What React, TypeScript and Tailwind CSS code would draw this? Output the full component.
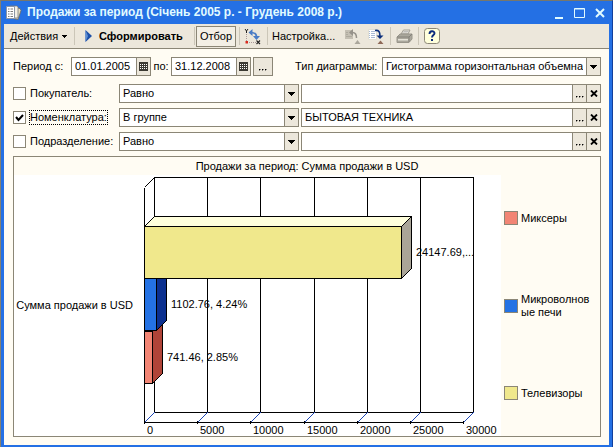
import type { ReactNode } from 'react';

const inputClass = 'min-w-0 flex-1 bg-white px-[3px] text-[11px] outline-none';
const boxClass = 'flex h-[19px] min-w-0 border border-[#8b8676] bg-white';
const cellClass = 'flex w-3.5 shrink-0 items-center justify-center border-l border-[#8b8676] bg-[#ece7db]';

const filters = [
  { id: 'buyer', label: 'Покупатель:', mode: 'Равно', value: '', checked: false },
  { id: 'item', label: 'Номенклатура:', mode: 'В группе', value: 'БЫТОВАЯ ТЕХНИКА', checked: true },
  { id: 'dept', label: 'Подразделение:', mode: 'Равно', value: '', checked: false },
];

const Arrow = () => (
  <svg width="7" height="4" viewBox="0 0 7 4" shapeRendering="crispEdges">
    <path d="M0 0h7v1h-1v1h-1v1h-1v1h-1v-1h-1v-1h-1v-1h-1z" fill="#000" />
  </svg>
);

const Dots = () => (
  <svg width="8" height="8" viewBox="0 0 8 8" shapeRendering="crispEdges">
    <path d="M0 6h1v1H0zM3 6h1v1H3zM6 6h1v1H6z" fill="#000" stroke="#000" strokeWidth=".4" />
  </svg>
);

const Cross = () => (
  <svg width="8" height="7" viewBox="0 0 8 7">
    <path d="M1 .5l6 6M7 .5l-6 6" stroke="#000" strokeWidth="1.8" />
  </svg>
);

const Separator = () => <span className="h-[18px] w-px bg-[#cbc6b8]" />;

const TitleIcon = () => (
  <svg width="16" height="16" viewBox="0 0 16 16">
    <path d="M7 2l7 1.500 1 2-3 9-5-1z" fill="#e6dfc4" stroke="#6f6a5c" strokeWidth=".8" />
    <path d="M4 1h7l1 1v11H4z" fill="#f3f0e6" stroke="#77797c" strokeWidth=".8" />
    <path d="M.5 1.500h8v12h-8z" fill="#fff" stroke="#8a95a5" />
    <path d="M2 4h1.500m1 0H7M2 6.500h1.500m1 0H7M2 9h1.500m1 0H7M2 11.500h1.500m1 0H7" stroke="#7b7b7b" />
  </svg>
);

const AxesIcon = () => (
  <svg width="17" height="17" viewBox="0 0 17 17">
    <path d="M1 1l1.500 2L4 1M2.500 3v2" fill="none" stroke="#222" />
    <path d="M2.500 6v8M5 14.500h7" fill="none" stroke="#a99" strokeDasharray="1 1" />
    <path d="M1.500 13h2.500v2.500H1.500z" fill="#d92b1f" />
    <path d="M12.500 12.500l3.500 3.500m0-3.500l-3.500 3.500" stroke="#222" strokeWidth="1.100" />
    <path d="M7 4.500c3 0 5.500 1.500 5.500 4.500" fill="none" stroke="#4a7cc6" strokeWidth="1.700" />
    <path d="M4.500 4.500L8.500 1v7zM9 8h7l-3.500 4z" fill="#4a7cc6" />
  </svg>
);

const SaveIcon = () => (
  <svg width="17" height="17" viewBox="0 0 17 17">
    <path d="M1 2h8v9H1z" fill="#c4bfb3" />
    <path d="M2 4.500h2M2 6.500h2M2 8.500h6" stroke="#aeaa9e" />
    <path d="M8.500 4.500c3 0 4 1.500 4 5.500" fill="none" stroke="#96928a" strokeWidth="1.500" />
    <path d="M5 4.500L9 1v7z" fill="#96928a" />
    <path d="M10.500 16l3-4 3 4z" fill="#aaa69b" />
  </svg>
);

const RestoreIcon = () => (
  <svg width="17" height="17" viewBox="0 0 17 17">
    <path d="M1.500 1.500h8v10h-8z" fill="#fff" stroke="#e2dfd4" />
    <path d="M2 3.500h1m1 0h4M2 5.500h1m1 0h4M2 7.500h1m1 0h4M2 9.500h1m1 0h4" stroke="#a9bbd4" />
    <path d="M8 2.500c4-.5 5 1 5 6" fill="none" stroke="#0b2f7c" strokeWidth="1.600" />
    <path d="M9.500 7.500h7L13 11z" fill="#0b2f7c" />
    <path d="M10.500 16l3-3.500 3 3.500z" fill="#8f6a58" />
  </svg>
);

const PrinterIcon = () => (
  <svg width="17" height="16" viewBox="0 0 17 16">
    <path d="M5 6l2.500-4H14l-2 4z" fill="#efece2" stroke="#a19e94" />
    <path d="M7.500 3.500h5M6.500 5h5" stroke="#aaa" strokeWidth=".7" />
    <path d="M1 9l3-3h12v5l-3 3.500H1z" fill="#aaa79c" stroke="#98958a" />
    <path d="M1 9h12v5M13 9l3-3" fill="none" stroke="#85827a" />
    <path d="M2 11h10v1.500H2z" fill="#e5e2d8" />
  </svg>
);

const HelpIcon = () => (
  <svg width="16" height="16" viewBox="0 0 16 16">
    <rect x=".5" y=".5" width="15" height="15" rx="3" fill="#ffffdc" stroke="#8b8676" />
    <path d="M5.500 6c0-3.500 5-3.500 5-.8C10.500 7 8 7 8 9.500" fill="none" stroke="#0a2a7c" strokeWidth="1.900" />
    <path d="M7 11h2v2H7z" fill="#0a2a7c" />
  </svg>
);

const CalendarIcon = () => (
  <svg width="9" height="9" viewBox="0 0 9 9" shapeRendering="crispEdges">
    <path d="M0 0h9v9H0z" fill="#3c3a33" />
    <path d="M1 2h1v1H1zM3 2h1v1H3zM5 2h1v1H5zM7 2h1v1H7zM1 4h1v1H1zM3 4h1v1H3zM5 4h1v1H5zM7 4h1v1H7zM1 6h1v1H1zM3 6h1v1H3zM5 6h1v1H5zM7 6h1v1H7z" fill="#fff" />
  </svg>
);

const ToolButton = ({ label, children }: { label: string; children: ReactNode }) => (
  <button aria-label={label} className="flex h-5 items-center">
    {children}
  </button>
);

const SelectBox = ({ label, value, className }: { label: string; value: string; className: string }) => (
  <div className={`${boxClass} ${className}`}>
    <select aria-label={label} className={`${inputClass} appearance-none`}>
      <option>{value}</option>
    </select>
    <span className={cellClass}>
      <Arrow />
    </span>
  </div>
);

const DateBox = ({ id, value }: { id: string; value: string }) => (
  <div className={`${boxClass} w-20`}>
    <input id={id} defaultValue={value} className={inputClass} />
    <button aria-label="Календарь" className={cellClass}>
      <CalendarIcon />
    </button>
  </div>
);

// 3D bar chart geometry
const LEFT = 130;
const DEPTH = 10;
const SCALE = 319 / 30000;
const ticks = [0, 5000, 10000, 15000, 20000, 25000, 30000];
const bars = [
  { value: 741.46, text: '741.46, 2.85%', y: 156, front: '#f28574', side: '#b04438', top: '#ffb4a8' },
  { value: 1102.76, text: '1102.76, 4.24%', y: 103, front: '#2472e4', side: '#0b308f', top: '#6fa4f2' },
  { value: 24147.69, text: '24147.69,...', y: 51, front: '#f0e88c', side: '#aaa598', top: '#ffffdc' },
];

const Chart = () => (
  <svg viewBox="0 0 487 261" className="min-w-0 flex-1 bg-white text-[11px]" shapeRendering="crispEdges">
    <g stroke="#000" fill="none">
      <path d="M140.500 2.500h319v235h-319zM130.500 12.500v235h319M130.500 12.500l10-10" />
      {ticks.map((t) => {
        const x = Math.round(LEFT + t * SCALE) + 0.5;
        return (
          <g key={t}>
            <path d={`M${x + DEPTH} 2.500v235M${x} 246v3`} />
            <path d={`M${x} 247.500l10-10`} stroke="#1d46b4" />
          </g>
        );
      })}
      {bars.map((b) => {
        const x = Math.round(LEFT + b.value * SCALE) + 0.5;
        const y = b.y + 0.5;
        return (
          <g key={b.text} strokeLinejoin="round">
            <path d={`M130.500 ${y}l10-10H${x + DEPTH}L${x} ${y}z`} fill={b.top} />
            <path d={`M${x} ${y}l10-10v52l-10 10z`} fill={b.side} />
            <path d={`M130.500 ${y}H${x}v52H130.500z`} fill={b.front} />
          </g>
        );
      })}
    </g>
    {bars.map((b) => (
      <text key={b.text} x={Math.round(LEFT + b.value * SCALE) + 15} y={b.y + 30}>
        {b.text}
      </text>
    ))}
    <text x="119" y="134" textAnchor="end">Сумма продажи в USD</text>
    {ticks.map((t) => (
      <text key={t} x={Math.round(LEFT + t * SCALE) + 3} y="259">
        {t}
      </text>
    ))}
  </svg>
);

const legend = [
  { label: 'Миксеры', color: 'bg-[#f28574]' },
  { label: 'Микроволновые печи', color: 'bg-[#2472e4]' },
  { label: 'Телевизоры', color: 'bg-[#f0e88c]' },
];

export default function App() {
  return (
    <div className="border-x border-t border-l-[#85806f] border-r-[#123f9c] border-t-[#77776c] bg-[#2470e4] px-[3px] pb-[3px] font-['Liberation_Sans',Arial,sans-serif] text-[11px] leading-[13px] text-black">
      <header className="flex h-[23px] items-center gap-[5px] pl-0.5 pr-1">
        <TitleIcon />
        <h1 className="flex-1 whitespace-nowrap text-[12px] font-bold text-[#e2fbff]">
          Продажи за период (Січень 2005 р. - Грудень 2008 р.)
        </h1>
        <div className="flex gap-2.5">
          <button aria-label="Свернуть">
            <svg width="10" height="12" viewBox="0 0 10 12"><path d="M1 10h8v2H1z" fill="#e2fbff" /></svg>
          </button>
          <button aria-label="Развернуть">
            <svg width="11" height="12" viewBox="0 0 11 12"><path d="M.5 1.500h10v9H.5zM.5 2h10" fill="none" stroke="#e2fbff" /></svg>
          </button>
          <button aria-label="Закрыть">
            <svg width="10" height="12" viewBox="0 0 10 12"><path d="M1 2l8 8M9 2l-8 8" stroke="#e2fbff" strokeWidth="2" /></svg>
          </button>
        </div>
      </header>

      <div className="flex h-[25px] items-center whitespace-nowrap border-b border-[#8b8676] bg-[#ece7db] pl-1.5">
        <div className="flex w-16">
          <button className="flex items-center gap-1">
            Действия
            <svg width="5" height="3" viewBox="0 0 5 3" shapeRendering="crispEdges"><path d="M0 0h5v1h-1v1h-1v1h-1v-1h-1v-1h-1z" /></svg>
          </button>
        </div>
        <Separator />
        <div className="flex w-[119px] pl-2.5">
          <button className="flex items-center gap-[7px] font-bold">
            <svg width="7" height="12" viewBox="0 0 7 12"><path d="M.5 0L7 6 .5 12z" fill="#1c4fa8" /><path d="M.5 0v12L3 6z" fill="#5f8fd4" /></svg>
            Сформировать
          </button>
        </div>
        <Separator />
        <button className="ml-px h-[21px] w-10 border border-[#8b8676] bg-[#f3efe5]">Отбор</button>
        <div className="flex items-center gap-1 pl-[3px]">
          <Separator />
          <ToolButton label="Оси диаграммы"><AxesIcon /></ToolButton>
        </div>
        <div className="flex items-center gap-1 pl-1.5">
          <Separator />
          <button className="w-[70px] text-left">Настройка...</button>
        </div>
        <div className="flex items-center gap-1.5 pl-0.5 pr-1.5">
          <ToolButton label="Сохранить настройки"><SaveIcon /></ToolButton>
          <ToolButton label="Восстановить настройки"><RestoreIcon /></ToolButton>
        </div>
        <div className="flex items-center gap-[5px]">
          <Separator />
          <ToolButton label="Печать"><PrinterIcon /></ToolButton>
          <Separator />
          <ToolButton label="Справка"><HelpIcon /></ToolButton>
        </div>
      </div>

      <main className="flex flex-col gap-[5px] bg-[#fffcf3] px-2 pb-2 pt-2">
        <div className="mb-[3px] flex items-center whitespace-nowrap pl-px">
          <label htmlFor="from" className="w-[58px]">Период с:</label>
          <DateBox id="from" value="01.01.2005" />
          <label htmlFor="to" className="w-5 text-center">по:</label>
          <DateBox id="to" value="31.12.2008" />
          <button aria-label="Выбрать период" className="ml-0.5 flex h-[19px] w-5 items-center justify-center border border-[#8b8676] bg-[#ece7db]">
            <Dots />
          </button>
          <span className="ml-[22px] w-[87px]">Тип диаграммы:</span>
          <SelectBox label="Тип диаграммы" value="Гистограмма горизонтальная объемная" className="flex-1" />
        </div>

        {filters.map((f) => (
          <div key={f.id} className="flex items-center pl-px">
            <div className="flex w-[106px] shrink-0 items-center gap-[3px]">
              <input
                id={f.id}
                type="checkbox"
                defaultChecked={f.checked}
                className="h-[13px] w-[13px] shrink-0 appearance-none border border-[#8b8676] bg-white"
              />
              {f.checked && (
                <svg width="9" height="8" viewBox="0 0 9 8" className="pointer-events-none -ml-3.5 mr-0.5 shrink-0">
                  <path d="M1 3l2.500 3L8 1" fill="none" stroke="#000" strokeWidth="2" />
                </svg>
              )}
              <label
                htmlFor={f.id}
                className={`whitespace-nowrap border border-dotted ${f.checked ? 'border-black' : 'border-transparent'}`}
              >
                {f.label}
              </label>
            </div>
            <SelectBox label={`${f.label} условие`} value={f.mode} className="w-[180px] shrink-0" />
            <div className={`${boxClass} ml-0.5 flex-1`}>
              <input aria-label={`${f.label} значение`} defaultValue={f.value} className={inputClass} />
              <button aria-label="Выбрать" className={cellClass}><Dots /></button>
              <button aria-label="Очистить" className={cellClass}><Cross /></button>
            </div>
          </div>
        ))}

        <section className="ml-px border border-[#8b8676]">
          <h2 className="h-[18px] pt-[3px] text-center">Продажи за период: Сумма продажи в USD</h2>
          <div className="flex">
            <Chart />
            <ul className="flex w-[99px] shrink-0 flex-col justify-between pb-9 pl-[3px] pt-9">
              {legend.map((l) => (
                <li key={l.label} className="flex items-center gap-[3px]">
                  <span className={`h-3.5 w-3.5 shrink-0 border border-[#8b8676] ${l.color}`} />
                  <span className="w-[70px] break-all">{l.label}</span>
                </li>
              ))}
            </ul>
          </div>
        </section>
      </main>
    </div>
  );
}
